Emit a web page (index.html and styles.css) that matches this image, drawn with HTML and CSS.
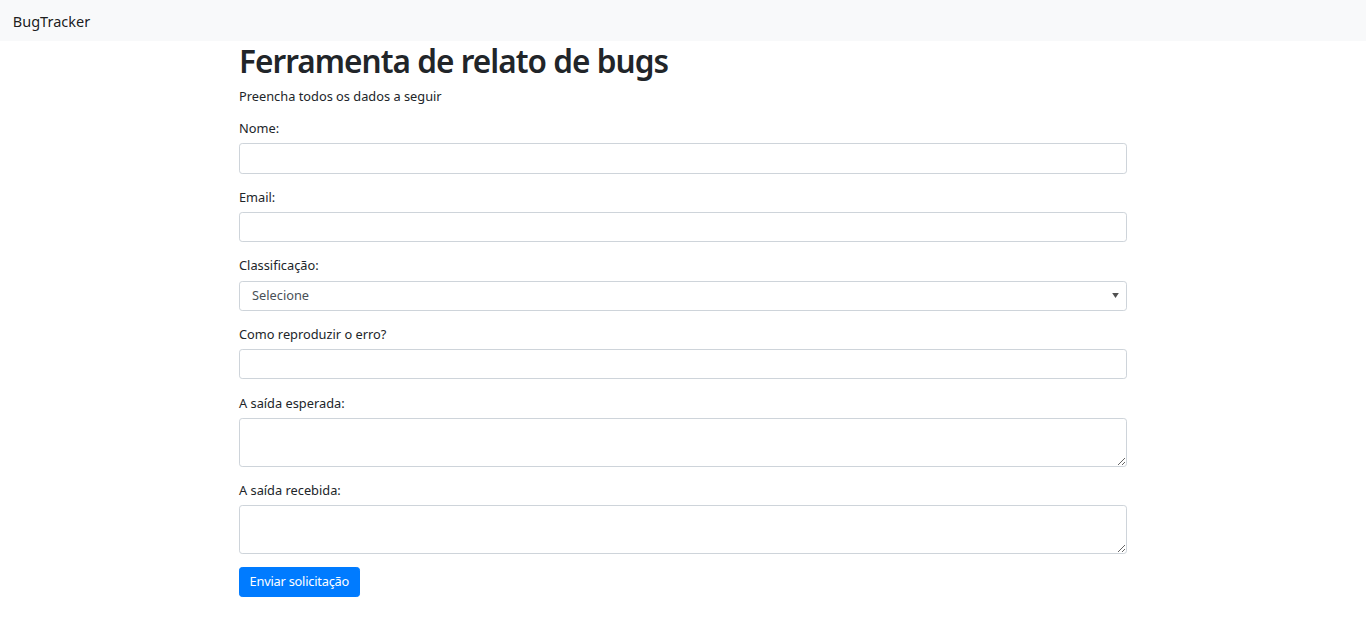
FILE: index.html
```html
<!DOCTYPE html>
<html lang="pt-BR">
<head>
<meta charset="utf-8">
<title>BugTracker</title>
<link rel="stylesheet" href="styles.css">
</head>
<body>
<nav class="navbar">
  <a class="navbar-brand" href="#">BugTracker</a>
</nav>
<main class="container">
  <h1 class="title">Ferramenta de relato de bugs</h1>
  <p class="lead-text">Preencha todos os dados a seguir</p>
  <form class="bug-form">
    <div class="form-group">
      <label for="nome">Nome:</label>
      <input type="text" id="nome" class="form-control">
    </div>
    <div class="form-group">
      <label for="email">Email:</label>
      <input type="email" id="email" class="form-control">
    </div>
    <div class="form-group">
      <label for="classificacao">Classificação:</label>
      <select id="classificacao" class="form-control form-select">
        <option>Selecione</option>
      </select>
    </div>
    <div class="form-group">
      <label for="reproduzir">Como reproduzir o erro?</label>
      <input type="text" id="reproduzir" class="form-control">
    </div>
    <div class="form-group">
      <label for="esperada">A saída esperada:</label>
      <textarea id="esperada" class="form-control form-textarea" rows="2"></textarea>
    </div>
    <div class="form-group">
      <label for="recebida">A saída recebida:</label>
      <textarea id="recebida" class="form-control form-textarea" rows="2"></textarea>
    </div>
    <button type="submit" class="btn-primary">Enviar solicitação</button>
  </form>
</main>
</body>
</html>
```

FILE: styles.css
```css
* { box-sizing: border-box; }

html, body {
  margin: 0;
  padding: 0;
}

body {
  font-family: "Noto Sans", "Open Sans", sans-serif;
  font-size: 12.8px;
  line-height: 1.5;
  color: #212529;
  background: #fff;
}

.navbar {
  display: flex;
  align-items: center;
  height: 41px;
  padding: 0 12.8px;
  background: #f8f9fa;
}

.navbar-brand {
  font-size: 14.5px;
  line-height: 24px;
  color: rgba(0, 0, 0, 0.9);
  text-decoration: none;
}

.container {
  width: 912px;
  margin: 0 auto;
  padding: 0 12px;
}

.title {
  margin: 0 0 6.4px;
  padding-top: 1px;
  font-size: 31.5px;
  font-weight: 600;
  line-height: 37.4px;
  letter-spacing: -0.95px;
}

.lead-text {
  margin: 0 0 12.8px;
  padding-top: 1px;
  line-height: 18.2px;
}

.form-group {
  margin-bottom: 12.6px;
}

.form-group label {
  display: block;
  padding-top: 1.5px;
  margin-bottom: 4.9px;
}

.form-control {
  display: block;
  width: 100%;
  height: 30.4px;
  padding: 3.2px 9.6px;
  font-family: inherit;
  font-size: 12.8px;
  line-height: 1.5;
  color: #495057;
  background: #fff;
  border: 1px solid #ced4da;
  border-radius: 3.2px;
  outline: none;
}

.form-select {
  appearance: none;
  -webkit-appearance: none;
  padding-left: 12px;
  background-image: url("data:image/svg+xml,%3Csvg xmlns='http://www.w3.org/2000/svg' width='8' height='6' viewBox='0 0 8 6'%3E%3Cpath d='M0 0h8L4 6z' fill='%23505050'/%3E%3C/svg%3E");
  background-repeat: no-repeat;
  background-position: right 7px center;
  background-size: 7px 5px;
}

.form-textarea {
  height: 49.2px;
  resize: vertical;
}

.btn-primary {
  display: inline-block;
  height: 30px;
  margin-top: 0.2px;
  padding: 3.2px 9.6px;
  font-family: inherit;
  font-size: 12.8px;
  line-height: 1.5;
  letter-spacing: -0.22px;
  color: #fff;
  background: #007bff;
  border: 1px solid #007bff;
  border-radius: 3.2px;
  cursor: pointer;
}
```
